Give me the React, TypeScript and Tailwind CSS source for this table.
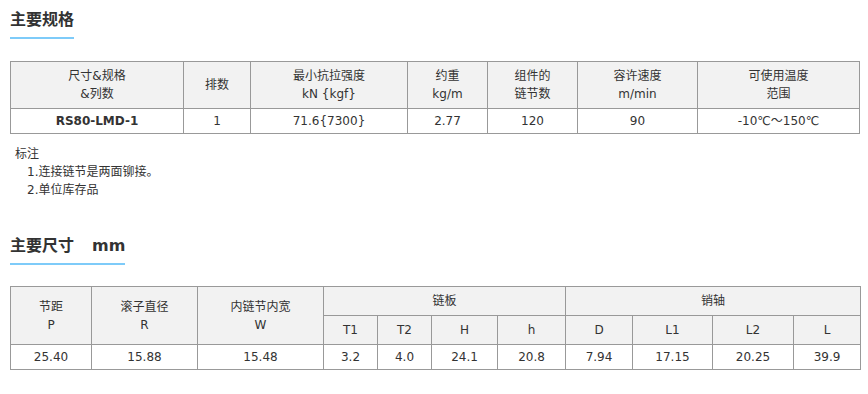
const font = { fontFamily: '"DejaVu Sans", "Noto Sans CJK SC", sans-serif' }

function Title({ children }: { children: React.ReactNode }) {
  return (
    <div>
      <h2 className="inline-block border-b-2 border-[#7ecbf9] pb-[5px] text-[16px] font-bold leading-6 text-[#333]">
        {children}
      </h2>
    </div>
  )
}

const th = 'border border-[#999] bg-[#f2f2f2] text-center font-normal align-middle'
const td = 'border border-[#999] text-center align-middle'

const dims = ['25.40', '15.88', '15.48', '3.2', '4.0', '24.1', '20.8', '7.94', '17.15', '20.25', '39.9']

export default function App() {
  return (
    <div className="bg-white pl-[10px] pt-[8px] pb-4 text-[12px] leading-[18px] text-[#333]" style={font}>
      {/* 主要规格 */}
      <Title>主要规格</Title>
      <table className="mt-[22px] w-[849px] table-fixed border-collapse">
        <colgroup>
          <col className="w-[173px]" />
          <col className="w-[67px]" />
          <col className="w-[157px]" />
          <col className="w-[80px]" />
          <col className="w-[90px]" />
          <col className="w-[120px]" />
          <col className="w-[162px]" />
        </colgroup>
        <thead>
          <tr className="h-[47px]">
            <th className={th}>尺寸&amp;规格<br />&amp;列数</th>
            <th className={th}>排数</th>
            <th className={th}>最小抗拉强度<br />kN {'{kgf}'}</th>
            <th className={th}>约重<br />kg/m</th>
            <th className={th}>组件的<br />链节数</th>
            <th className={th}>容许速度<br />m/min</th>
            <th className={th}>可使用温度<br />范围</th>
          </tr>
        </thead>
        <tbody>
          <tr className="h-[25px]">
            <td className={td + ' font-bold'}>RS80-LMD-1</td>
            <td className={td}>1</td>
            <td className={td}>71.6{'{7300}'}</td>
            <td className={td}>2.77</td>
            <td className={td}>120</td>
            <td className={td}>90</td>
            <td className={td}>-10℃～150℃</td>
          </tr>
        </tbody>
      </table>

      {/* 标注 */}
      <div className="mt-[11px] pl-[5px]">
        <p>标注</p>
        <ol className="pl-[12px]">
          <li>1.连接链节是两面铆接。</li>
          <li>2.单位库存品</li>
        </ol>
      </div>

      {/* 主要尺寸 */}
      <div className="mt-[35px]">
        <Title>
          主要尺寸<span className="pl-[18px]">mm</span>
        </Title>
      </div>
      <table className="mt-[21px] w-[849px] table-fixed border-collapse">
        <colgroup>
          <col className="w-[81px]" />
          <col className="w-[106px]" />
          <col className="w-[126px]" />
          <col className="w-[54px]" />
          <col className="w-[54px]" />
          <col className="w-[66px]" />
          <col className="w-[68px]" />
          <col className="w-[67px]" />
          <col className="w-[80px]" />
          <col className="w-[81px]" />
          <col className="w-[67px]" />
        </colgroup>
        <thead>
          <tr className="h-[29px]">
            <th rowSpan={2} className={th}>节距<br />P</th>
            <th rowSpan={2} className={th}>滚子直径<br />R</th>
            <th rowSpan={2} className={th}>内链节内宽<br />W</th>
            <th colSpan={4} className={th}>链板</th>
            <th colSpan={4} className={th}>销轴</th>
          </tr>
          <tr className="h-[29px]">
            {['T1', 'T2', 'H', 'h', 'D', 'L1', 'L2', 'L'].map((h) => (
              <th key={h} className={th}>{h}</th>
            ))}
          </tr>
        </thead>
        <tbody>
          <tr className="h-[25px]">
            {dims.map((d, i) => (
              <td key={i} className={td}>{d}</td>
            ))}
          </tr>
        </tbody>
      </table>
    </div>
  )
}
